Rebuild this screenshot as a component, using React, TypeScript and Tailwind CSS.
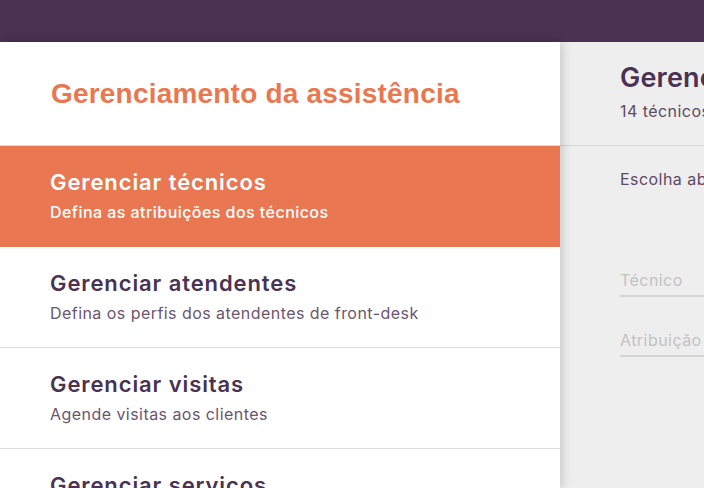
import React from "react";

const items = [
  { t: "Gerenciar técnicos", s: "Defina as atribuições dos técnicos", active: true },
  { t: "Gerenciar atendentes", s: "Defina os perfis dos atendentes de front-desk" },
  { t: "Gerenciar visitas", s: "Agende visitas aos clientes" },
  { t: "Gerenciar serviços", s: "Cadastre os serviços oferecidos" },
];

export default function App() {
  return (
    <div className="w-[704px] h-[488px] overflow-hidden flex flex-col" style={{ fontFamily: "Inter, 'Noto Sans', sans-serif" }}>
      <div className="h-[42px] bg-[#4a3252] shrink-0" />
      <div className="flex flex-1 min-h-0">
        <div className="w-[560px] shrink-0 bg-white relative z-10 shadow-[2px_0_10px_rgba(0,0,0,0.18)]">
          <div className="h-[104px] flex items-center pl-[51px] border-b border-[#dddddd]">
            <h1 className="text-[28px] text-[#e9774f] font-bold tracking-[0.2px]" style={{ fontFamily: "'Liberation Sans', Arial, sans-serif" }}>
              Gerenciamento da assistência
            </h1>
          </div>
          {items.map((it) => (
            <div
              key={it.t}
              className={`h-[101px] pl-[50px] pt-[21px] border-b ${it.active ? "bg-[#e97752] border-[#e97752]" : "bg-white border-[#dddddd]"}`}
            >
              <div className={`text-[22px] font-semibold leading-[30px] tracking-[0.9px] ${it.active ? "text-white" : "text-[#4a3252]"}`}>{it.t}</div>
              <div className={`text-[16px] leading-[22px] mt-[4px] tracking-[0.45px] ${it.active ? "text-white font-medium" : "text-[#6b5570]"}`}>{it.s}</div>
            </div>
          ))}
        </div>
        <div className="flex-1 bg-[#eeeeee] min-w-0 overflow-hidden">
          <div className="h-[104px] border-b border-[#d6d6d6] pl-[60px] pt-[19px] whitespace-nowrap">
            <div className="text-[27px] font-semibold text-[#4a3252] leading-[34px] tracking-[0.2px]">Gerenciar técnicos</div>
            <div className="text-[16px] text-[#5d4a63] leading-[22px] mt-[5px] tracking-[0.45px]">14 técnicos cadastrados</div>
          </div>
          <div className="pl-[60px] whitespace-nowrap tracking-[0.45px]">
            <div className="text-[16px] text-[#5d4a63] mt-[22px] leading-[22px]">Escolha abaixo o técnico</div>
            <div className="mt-[78px] w-[200px] border-b-2 border-[#d4d4d4] text-[16px] text-[#c2c2c2] leading-[24px] pb-[3px]">Técnico</div>
            <div className="mt-[31px] w-[200px] border-b-2 border-[#d4d4d4] text-[16px] text-[#c2c2c2] leading-[24px] pb-[3px]">Atribuição</div>
          </div>
        </div>
      </div>
    </div>
  );
}
